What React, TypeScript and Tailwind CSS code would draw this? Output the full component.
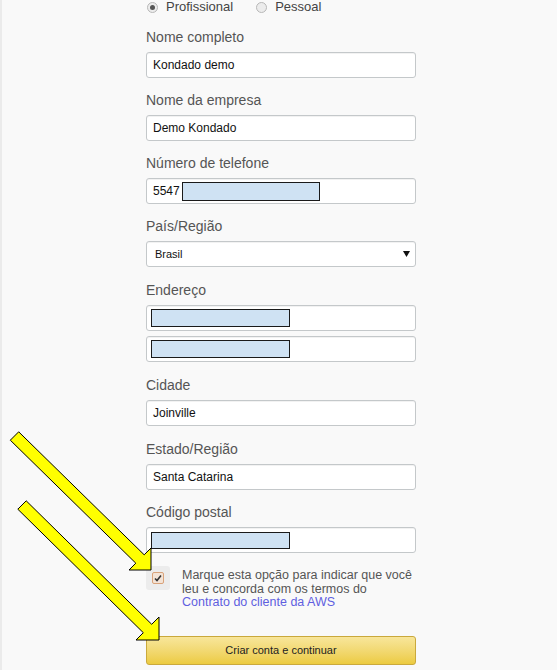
import React from 'react';

function Label({ text, mt }: { text: string; mt: string }) {
  return <div className={`${mt} h-[18px] leading-[18px] text-[14px] text-[#555]`}>{text}</div>;
}

function Field({ children }: { children?: React.ReactNode }) {
  return (
    <div className="mt-[6px] h-[26px] w-[270px] bg-white border border-[#c4c8ca] rounded-[3px] shadow-[inset_0_1px_0_rgba(0,0,0,0.05)] flex items-center text-[12px] text-[#111]">
      {children}
    </div>
  );
}

function Masked({ className }: { className: string }) {
  return <div className={`bg-[#cfe2f3] border border-[#1a1a1a] ${className}`} />;
}

function Radio({ checked, label }: { checked?: boolean; label: string }) {
  return (
    <div className="flex items-center gap-[8px]">
      <span className="w-[11px] h-[11px] rounded-full border border-[#b8b8b8] bg-[#ececec] flex items-center justify-center">
        {checked && <span className="w-[5px] h-[5px] rounded-full bg-[#555]" />}
      </span>
      <span className="text-[13px] text-[#444]">{label}</span>
    </div>
  );
}

export default function App() {
  return (
    <div className="relative w-full min-h-[670px] bg-[#f9f9f9] border-l-2 border-[#ebebeb] font-['Liberation_Sans',Arial,sans-serif] overflow-hidden">
      <div className="pl-[144px] w-[416px]">
        <div className="h-[14px] flex items-center gap-[23px] pl-[1px]">
          <Radio checked label="Profissional" />
          <Radio label="Pessoal" />
        </div>

        <Label text="Nome completo" mt="mt-[14px]" />
        <Field><span className="pl-[6px]">Kondado demo</span></Field>

        <Label text="Nome da empresa" mt="mt-[13px]" />
        <Field><span className="pl-[6px]">Demo Kondado</span></Field>

        <Label text="Número de telefone" mt="mt-[13px]" />
        <Field>
          <span className="pl-[6px]">5547</span>
          <Masked className="ml-[2px] w-[138px] h-[19px]" />
        </Field>

        <Label text="País/Região" mt="mt-[13px]" />
        <Field>
          <span className="pl-[8px] text-[11px] flex-1">Brasil</span>
          <svg width="7" height="6" viewBox="0 0 7 6" className="mr-[5px]">
            <polygon points="0,0 7,0 3.5,6" fill="#111" />
          </svg>
        </Field>

        <Label text="Endereço" mt="mt-[14px]" />
        <Field><Masked className="ml-[4px] w-[139px] h-[18px]" /></Field>
        <div className="-mt-[1px]">
          <Field><Masked className="ml-[4px] w-[139px] h-[18px]" /></Field>
        </div>

        <Label text="Cidade" mt="mt-[14px]" />
        <Field><span className="pl-[6px]">Joinville</span></Field>

        <Label text="Estado/Região" mt="mt-[14px]" />
        <Field><span className="pl-[6px]">Santa Catarina</span></Field>

        <Label text="Código postal" mt="mt-[13px]" />
        <Field><Masked className="ml-[4px] w-[139px] h-[17px]" /></Field>

        <div className="mt-[13px] flex gap-[12px]">
          <div className="w-[24px] h-[24px] rounded-[3px] bg-[#ececec] flex items-center justify-center shrink-0">
            <span className="w-[12px] h-[12px] rounded-[2px] border border-[#d9a27a] bg-[#f3e3d6] flex items-center justify-center">
              <svg width="8" height="8" viewBox="0 0 8 8">
                <path d="M1 4.5 L3 6.5 L7 1.5" stroke="#333" strokeWidth="1.6" fill="none" />
              </svg>
            </span>
          </div>
          <p className="pt-[3px] text-[12.5px] leading-[13.5px] text-[#555]">
            Marque esta opção para indicar que você<br />
            leu e concorda com os termos do<br />
            <span className="text-[#5f5fe0]">Contrato do cliente da AWS</span>
          </p>
        </div>

        <button className="mt-[26px] w-[270px] h-[29px] rounded-[3px] border border-[#caa93c] bg-gradient-to-b from-[#f8e69a] to-[#eccb3f] text-[11px] text-[#222] flex items-center justify-center">
          Criar conta e continuar
        </button>
      </div>

      <svg className="absolute left-0 top-0 pointer-events-none" width="557" height="670" viewBox="0 0 557 670">
        <polygon
          points="16.7,431.8 142.2,554.8 149,548 149,570 127,570 133.8,563.2 8.3,440.2"
          fill="#ffff00"
          stroke="#000"
          strokeWidth="1"
          strokeLinejoin="miter"
        />
        <polygon
          points="24.2,500.8 149.7,624.3 157,617 157,640 134,640 141.3,632.7 15.8,509.2"
          fill="#ffff00"
          stroke="#000"
          strokeWidth="1"
          strokeLinejoin="miter"
        />
      </svg>
    </div>
  );
}
